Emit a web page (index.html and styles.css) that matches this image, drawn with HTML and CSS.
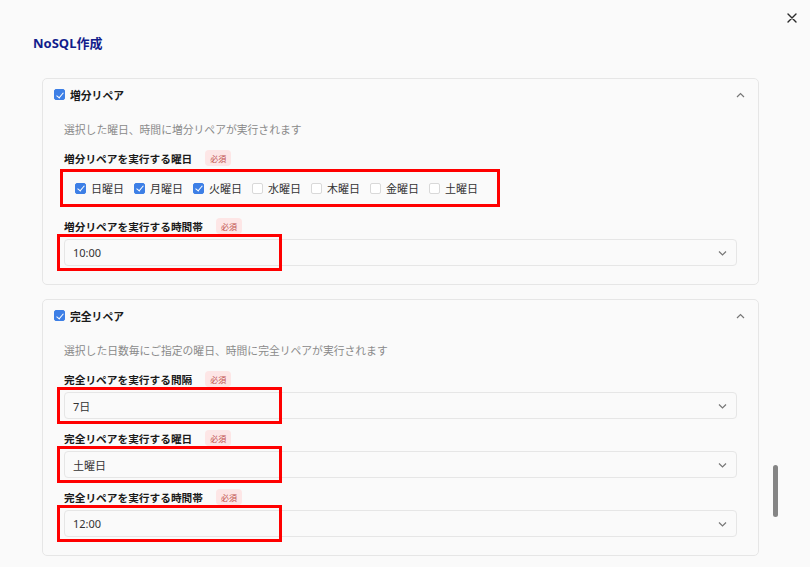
FILE: index.html
```html
<!DOCTYPE html>
<html lang="ja">
<head>
<meta charset="utf-8">
<title>NoSQL作成</title>
<link rel="stylesheet" href="styles.css">
</head>
<body>
<div class="dialog">
  <button class="close" aria-label="閉じる">
    <svg width="10" height="10" viewBox="0 0 10 10"><path d="M1 1L9 9M9 1L1 9" stroke="#2a2a2a" stroke-width="1.4" fill="none" stroke-linecap="round"/></svg>
  </button>
  <h1 class="title">NoSQL作成</h1>

  <div class="cards">
    <section class="card">
      <div class="card-head">
        <span class="cb checked"></span>
        <span class="card-title">増分リペア</span>
        <svg class="chev-up" width="9" height="6" viewBox="0 0 9 6"><path d="M1 5L4.5 1.5L8 5" stroke="#777" stroke-width="1.2" fill="none"/></svg>
      </div>
      <p class="desc">選択した曜日、時間に増分リペアが実行されます</p>
      <div class="label"><span>増分リペアを実行する曜日</span><span class="req">必須</span></div>
      <div class="days">
        <label class="day"><span class="cb checked"></span>日曜日</label>
        <label class="day"><span class="cb checked"></span>月曜日</label>
        <label class="day"><span class="cb checked"></span>火曜日</label>
        <label class="day"><span class="cb"></span>水曜日</label>
        <label class="day"><span class="cb"></span>木曜日</label>
        <label class="day"><span class="cb"></span>金曜日</label>
        <label class="day"><span class="cb"></span>土曜日</label>
        <span class="mark mark-days"></span>
      </div>
      <div class="label label-gap"><span>増分リペアを実行する時間帯</span><span class="req">必須</span></div>
      <div class="select"><span>10:00</span><svg class="chev" width="9" height="6" viewBox="0 0 9 6"><path d="M1 1.5L4.5 5L8 1.5" stroke="#777" stroke-width="1.2" fill="none"/></svg><span class="mark mark-sel"></span></div>
    </section>

    <section class="card">
      <div class="card-head">
        <span class="cb checked"></span>
        <span class="card-title">完全リペア</span>
        <svg class="chev-up" width="9" height="6" viewBox="0 0 9 6"><path d="M1 5L4.5 1.5L8 5" stroke="#777" stroke-width="1.2" fill="none"/></svg>
      </div>
      <p class="desc">選択した日数毎にご指定の曜日、時間に完全リペアが実行されます</p>
      <div class="fields">
        <div class="field">
          <div class="label"><span>完全リペアを実行する間隔</span><span class="req">必須</span></div>
          <div class="select"><span>7日</span><svg class="chev" width="9" height="6" viewBox="0 0 9 6"><path d="M1 1.5L4.5 5L8 1.5" stroke="#777" stroke-width="1.2" fill="none"/></svg><span class="mark mark-sel"></span></div>
        </div>
        <div class="field">
          <div class="label"><span>完全リペアを実行する曜日</span><span class="req">必須</span></div>
          <div class="select"><span>土曜日</span><svg class="chev" width="9" height="6" viewBox="0 0 9 6"><path d="M1 1.5L4.5 5L8 1.5" stroke="#777" stroke-width="1.2" fill="none"/></svg><span class="mark mark-sel"></span></div>
        </div>
        <div class="field">
          <div class="label"><span>完全リペアを実行する時間帯</span><span class="req">必須</span></div>
          <div class="select"><span>12:00</span><svg class="chev" width="9" height="6" viewBox="0 0 9 6"><path d="M1 1.5L4.5 5L8 1.5" stroke="#777" stroke-width="1.2" fill="none"/></svg><span class="mark mark-sel"></span></div>
        </div>
      </div>
    </section>
  </div>
  <div class="scrollbar"></div>
</div>
</body>
</html>
```

FILE: styles.css
```css
* { box-sizing: border-box; }
html, body { margin: 0; padding: 0; }
body {
  background: #fafafa;
  font-family: "Noto Sans", "Noto Sans CJK JP", sans-serif;
  color: #222;
  width: 810px;
  height: 567px;
  overflow: hidden;
}
.dialog {
  position: relative;
  width: 810px;
  height: 567px;
  padding: 34px 0 0 0;
}
.close {
  position: absolute;
  top: 13px;
  right: 13px;
  width: 10px;
  height: 10px;
  padding: 0;
  border: 0;
  background: none;
  display: flex;
}
.title {
  margin: 0 0 0 33px;
  font-size: 13px;
  line-height: 18px;
  font-weight: 700;
  color: #121d8c;
}
.cards {
  margin: 26px 0 0 42px;
  width: 717px;
  display: flex;
  flex-direction: column;
  gap: 14px;
}
.card {
  border: 1px solid #e6e6e6;
  border-radius: 5px;
  background: #fafafa;
  padding: 0 21px 18px 21px;
}
.card-head {
  height: 31px;
  display: flex;
  align-items: center;
  margin: 0 -8px 0 -10px;
}
.card-title {
  font-size: 10.8px;
  font-weight: 700;
  color: #1a1a1a;
  margin-left: 5px;
  flex: 1;
}
.cb {
  width: 11px;
  height: 11px;
  border-radius: 2px;
  border: 1px solid #d9d9d9;
  background: #fff;
  display: inline-block;
  flex: none;
  position: relative;
}
.cb.checked {
  background: #3d7fe6;
  border-color: #3d7fe6;
}
.cb.checked::after {
  content: "";
  position: absolute;
  left: 3px;
  top: 0.5px;
  width: 3px;
  height: 6px;
  border: solid #fff;
  border-width: 0 1.5px 1.5px 0;
  transform: rotate(40deg);
}
.desc {
  margin: 12px 0 0 0;
  font-size: 10.8px;
  line-height: 16px;
  color: #8a8a8a;
}
.label {
  margin-top: 12px;
  height: 16px;
  display: flex;
  align-items: center;
  font-size: 10.7px;
  font-weight: 700;
  color: #1a1a1a;
}
.label-gap { margin-top: 20px; }
.req {
  margin-left: 13px;
  height: 16px;
  width: 26px;
  border-radius: 4px;
  background: #fde6e6;
  color: #c0504d;
  font-size: 8px;
  font-weight: 400;
  display: flex;
  align-items: center;
  justify-content: center;
}
.days {
  position: relative;
  margin-top: 12px;
  height: 20px;
  display: flex;
  align-items: center;
  padding-left: 11px;
  gap: 10px;
}
.day {
  display: flex;
  align-items: center;
  gap: 5px;
  font-size: 11px;
  color: #333;
}
.select {
  position: relative;
  margin-top: 5px;
  height: 27px;
  border: 1px solid #e6e6e6;
  border-radius: 4px;
  background: #fafafa;
  display: flex;
  align-items: center;
  justify-content: space-between;
  padding: 0 9px 0 8px;
  font-size: 11px;
  color: #333;
}
.fields {
  margin-top: 12px;
  display: flex;
  flex-direction: column;
  gap: 11px;
}
.fields .label { margin-top: 0; }
.mark {
  position: absolute;
  border: 3.5px solid #ff0000;
  pointer-events: none;
}
.mark-days {
  left: -4px;
  top: -9px;
  width: 440px;
  height: 38px;
}
.mark-sel {
  left: -8px;
  top: -6px;
  width: 225px;
  height: 37px;
}
.scrollbar {
  position: absolute;
  left: 773px;
  top: 465px;
  width: 5px;
  height: 52px;
  border-radius: 3px;
  background: #858585;
}
```
